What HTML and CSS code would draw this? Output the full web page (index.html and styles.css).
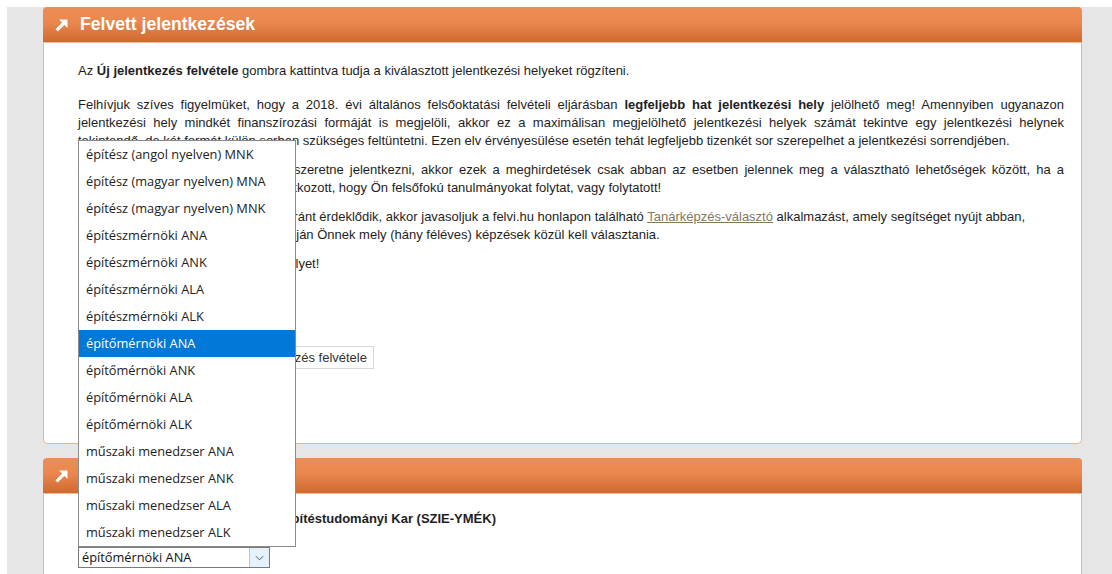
FILE: index.html
```html
<!DOCTYPE html>
<html lang="hu">
<head>
<meta charset="utf-8">
<title>Felvett jelentkezések</title>
<link rel="stylesheet" href="styles.css">
</head>
<body>
<div class="page">
  <section class="panel">
    <header class="panel-head">
      <svg class="head-icon" viewBox="0 0 13 13" width="13" height="13" aria-hidden="true">
        <polygon points="4,0.5 12.5,0.5 12.5,9" fill="#fff"/>
        <line x1="1.6" y1="11.4" x2="9.5" y2="3.5" stroke="#fff" stroke-width="3.2"/>
      </svg>
      <h2>Felvett jelentkezések</h2>
    </header>
    <div class="panel-body">
      <p class="lead">Az <b>Új jelentkezés felvétele</b> gombra kattintva tudja a kiválasztott jelentkezési helyeket rögzíteni.</p>
      <p class="just">Felhívjuk szíves figyelmüket, hogy a 2018. évi általános felsőoktatási felvételi eljárásban <b>legfeljebb hat jelentkezési hely</b> jelölhető meg! Amennyiben ugyanazon jelentkezési hely mindkét finanszírozási formáját is megjelöli, akkor ez a maximálisan megjelölhető jelentkezési helyek számát tekintve egy jelentkezési helynek tekintendő,&nbsp;de két formát külön sorban szükséges feltüntetni. Ezen elv érvényesülése esetén tehát legfeljebb tizenkét sor szerepelhet a jelentkezési sorrendjében.</p>
      <p class="just">Amennyiben Ön mesterképzésre is szeretne jelentkezni, akkor ezek a meghirdetések csak abban az esetben jelennek meg a választható lehetőségek között, ha a Személyes adatok menüpontnál nyilatkozott, hogy Ön felsőfokú tanulmányokat folytat, vagy folytatott!</p>
      <p>Amennyiben osztatlan tanári képzés iránt érdeklődik, akkor javasoljuk a felvi.hu honlapon található <a href="#">Tanárképzés-választó</a> alkalmazást, amely segítséget nyújt abban,<br>hogy a megszerzett végzettségei alapján Önnek mely (hány féléves) képzések közül kell választania.</p>
      <p>Kérjük körültekintően válassza ki a helyet!</p>
      <div class="actions">
        <button class="btn" type="button">Új jelentkezés felvétele</button>
      </div>
    </div>
  </section>

  <section class="panel">
    <header class="panel-head">
      <svg class="head-icon" viewBox="0 0 13 13" width="13" height="13" aria-hidden="true">
        <polygon points="4,0.5 12.5,0.5 12.5,9" fill="#fff"/>
        <line x1="1.6" y1="11.4" x2="9.5" y2="3.5" stroke="#fff" stroke-width="3.2"/>
      </svg>
      <h2>Jelentkezés</h2>
    </header>
    <div class="panel-body second">
      <p class="inst"><b>Szent István Egyetem Ybl Miklós Építéstudományi Kar (SZIE-YMÉK)</b></p>
      <div class="select-wrap">
        <ul class="listbox">
          <li>építész (angol nyelven) MNK</li>
          <li>építész (magyar nyelven) MNA</li>
          <li>építész (magyar nyelven) MNK</li>
          <li>építészmérnöki ANA</li>
          <li>építészmérnöki ANK</li>
          <li>építészmérnöki ALA</li>
          <li>építészmérnöki ALK</li>
          <li class="selected">építőmérnöki ANA</li>
          <li>építőmérnöki ANK</li>
          <li>építőmérnöki ALA</li>
          <li>építőmérnöki ALK</li>
          <li>műszaki menedzser ANA</li>
          <li>műszaki menedzser ANK</li>
          <li>műszaki menedzser ALA</li>
          <li>műszaki menedzser ALK</li>
        </ul>
        <div class="select">
          <span class="select-value">építőmérnöki ANA</span>
          <span class="select-arrow">
            <svg viewBox="0 0 10 6" width="9" height="6" aria-hidden="true">
              <polyline points="1,1 5,5 9,1" fill="none" stroke="#444" stroke-width="1"/>
            </svg>
          </span>
        </div>
      </div>
    </div>
  </section>
</div>
</body>
</html>
```
FILE: styles.css
```css
html, body {
  margin: 0;
  padding: 0;
  background: #fff;
}

body {
  font-family: "Liberation Sans", Arial, sans-serif;
  font-size: 13px;
  color: #1e1e1e;
  overflow: hidden;
}

.page {
  margin: 7px 0 0 7px;
  padding: 0 30px 0 36px;
  background: #e6e6e6;
  min-height: 600px;
  display: flex;
  flex-direction: column;
  gap: 14px;
}

.panel {
  display: flex;
  flex-direction: column;
}

.panel-head {
  height: 35px;
  border-radius: 4px 4px 0 0;
  background: linear-gradient(to bottom, #ed8d55 0%, #e9874e 45%, #cf6930 100%);
  border-bottom: 1px solid #f1b893;
  display: flex;
  align-items: center;
  gap: 12px;
  padding-left: 12px;
}

.head-icon {
  flex: none;
  margin-top: 1px;
}

.panel-head h2 {
  margin: 0;
  color: #fff;
  font-size: 17.6px;
  font-weight: bold;
}

.panel-body {
  background: #fff;
  border: 1px solid #e2b797;
  border-top: none;
  border-radius: 0 0 5px 5px;
  padding: 19px 17px 74px 34px;
  line-height: 18px;
}

.panel-body p {
  margin: 0 0 11px;
}

.panel-body p.lead {
  margin-bottom: 16px;
}

.panel-body p.just {
  text-align: justify;
}

.panel-body a {
  color: #827a55;
  text-decoration: underline;
}

.actions {
  margin-top: 73px;
  display: flex;
}

.btn {
  margin-left: 148px;
  height: 23px;
  padding: 0 6px 0 7px;
  background: #fff;
  border: 1px solid #d9d9d9;
  border-radius: 0;
  font-family: "Liberation Sans", Arial, sans-serif;
  font-size: 13px;
  color: #333;
}

.panel-body.second {
  padding: 16px 17px 40px 34px;
}

.panel-body.second p.inst {
  margin: 0 0 19px;
}

.select-wrap {
  position: relative;
  width: 192px;
}

.select {
  height: 21px;
  box-sizing: border-box;
  border: 1px solid #7a7a7a;
  display: flex;
  align-items: stretch;
  font-family: "Open Sans", "Noto Sans", sans-serif;
  font-size: 12.8px;
  color: #111;
  background: #fff;
}

.select-value {
  flex: 1;
  padding-left: 3px;
  line-height: 19px;
}

.select-arrow {
  width: 19px;
  background: #e5f1fb;
  border-left: 1px solid #a9cbe8;
  display: flex;
  align-items: center;
  justify-content: center;
}

.listbox {
  position: absolute;
  left: 0;
  bottom: 100%;
  width: 218px;
  box-sizing: border-box;
  margin: 0;
  padding: 0;
  list-style: none;
  background: #fff;
  border: 1px solid #8a8a8a;
  font-family: "Open Sans", "Noto Sans", sans-serif;
  font-size: 12.8px;
  color: #222;
}

.listbox li {
  height: 27px;
  line-height: 27px;
  padding-left: 7px;
  white-space: nowrap;
}

.listbox li.selected {
  background: #0078d7;
  color: #fff;
}
```
